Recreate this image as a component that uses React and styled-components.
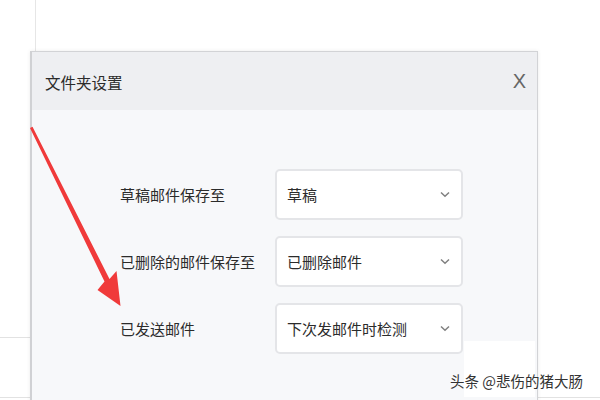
import React from "react";
import styled, { createGlobalStyle } from "styled-components";

const GlobalStyle = createGlobalStyle`
  html, body {
    margin: 0;
    padding: 0;
    background: #ffffff;
  }
  body {
    font-family: "Noto Sans CJK SC", "Noto Sans", sans-serif;
  }
`;

const rows = [
  { label: "草稿邮件保存至", value: "草稿" },
  { label: "已删除的邮件保存至", value: "已删除邮件" },
  { label: "已发送邮件", value: "下次发邮件时检测" },
];

function Chevron() {
  return (
    <svg width="10" height="7" viewBox="0 0 10 7" fill="none">
      <path d="M1 1.5 L5 5.3 L9 1.5" stroke="#808080" strokeWidth="1.5" />
    </svg>
  );
}

function FolderSettings() {
  return (
    <Page>
      <Main>
        <Sidebar>
          <SidebarTop />
        </Sidebar>
        <Content />
      </Main>
      <BottomBar />

      <Dialog>
        <Header>
          <Title>文件夹设置</Title>
          <Close>X</Close>
        </Header>
        <Body>
          {rows.map((row) => (
            <Row key={row.label}>
              <Label>{row.label}</Label>
              <Select>
                <span>{row.value}</span>
                <Chevron />
              </Select>
            </Row>
          ))}
        </Body>
      </Dialog>

      <Arrow width="600" height="400" viewBox="0 0 600 400">
        <polygon
          points="30,128 32.5,126.8 109.5,279 116.5,271 120.5,306 97.5,290 104.5,281.5"
          fill="#f03a3a"
        />
      </Arrow>

      <Watermark>
        <span>头条 @悲伤的猪大肠</span>
      </Watermark>
    </Page>
  );
}

const Page = styled.div`
  position: relative;
  width: 600px;
  height: 400px;
  overflow: hidden;
  display: flex;
  flex-direction: column;
  background: #ffffff;
`;

const Main = styled.div`
  flex: 1;
  display: flex;
`;

const Sidebar = styled.div`
  width: 35px;
  border-right: 1px solid #e6e6e6;
  display: flex;
  flex-direction: column;
`;

const SidebarTop = styled.div`
  height: 337px;
  border-bottom: 1px solid #e2e2e2;
`;

const Content = styled.div`
  flex: 1;
`;

const BottomBar = styled.div`
  height: 2px;
  border-top: 1px solid #e2e2e2;
`;

const Dialog = styled.div`
  position: absolute;
  left: 30px;
  top: 51px;
  width: 505px;
  height: 380px;
  border: 1px solid #d2d3d6;
  border-left: 2px solid #d0d1d4;
  box-shadow: 0 0 4px rgba(0, 0, 0, 0.08);
  background: #f7f8fa;
  display: flex;
  flex-direction: column;
`;

const Header = styled.div`
  height: 58px;
  background: #eeeff2;
  display: flex;
  align-items: center;
  justify-content: space-between;
  padding: 0 11px 0 13px;
`;

const Title = styled.div`
  font-size: 15.5px;
  color: #2b2b2b;
  padding-top: 2px;
`;

const Close = styled.div`
  font-family: "Liberation Sans", Arial, sans-serif;
  font-size: 20px;
  color: #666666;
`;

const Body = styled.div`
  flex: 1;
  display: flex;
  flex-direction: column;
  gap: 16px;
  padding: 59px 0 0 88px;
`;

const Row = styled.div`
  display: grid;
  grid-template-columns: 155px 188px;
  align-items: center;
`;

const Label = styled.div`
  font-size: 15px;
  color: #2b2b2b;
`;

const Select = styled.div`
  box-sizing: border-box;
  height: 51px;
  background: #ffffff;
  border: 2px solid #e4e5e8;
  border-radius: 5px;
  display: flex;
  align-items: center;
  justify-content: space-between;
  padding: 0 11px 0 10px;
  font-size: 15px;
  color: #2b2b2b;
`;

const Arrow = styled.svg`
  position: absolute;
  left: 0;
  top: 0;
  pointer-events: none;
`;

const Watermark = styled.div`
  position: absolute;
  left: 464px;
  top: 341px;
  width: 71px;
  height: 56px;
  background: #ffffff;
  span {
    position: absolute;
    left: -14px;
    top: 33px;
    font-size: 14.5px;
    color: #333333;
    white-space: nowrap;
    line-height: 1;
    text-shadow: 0 0 2px #ffffff;
  }
`;

export default function App() {
  return (
    <>
      <GlobalStyle />
      <FolderSettings />
    </>
  );
}
